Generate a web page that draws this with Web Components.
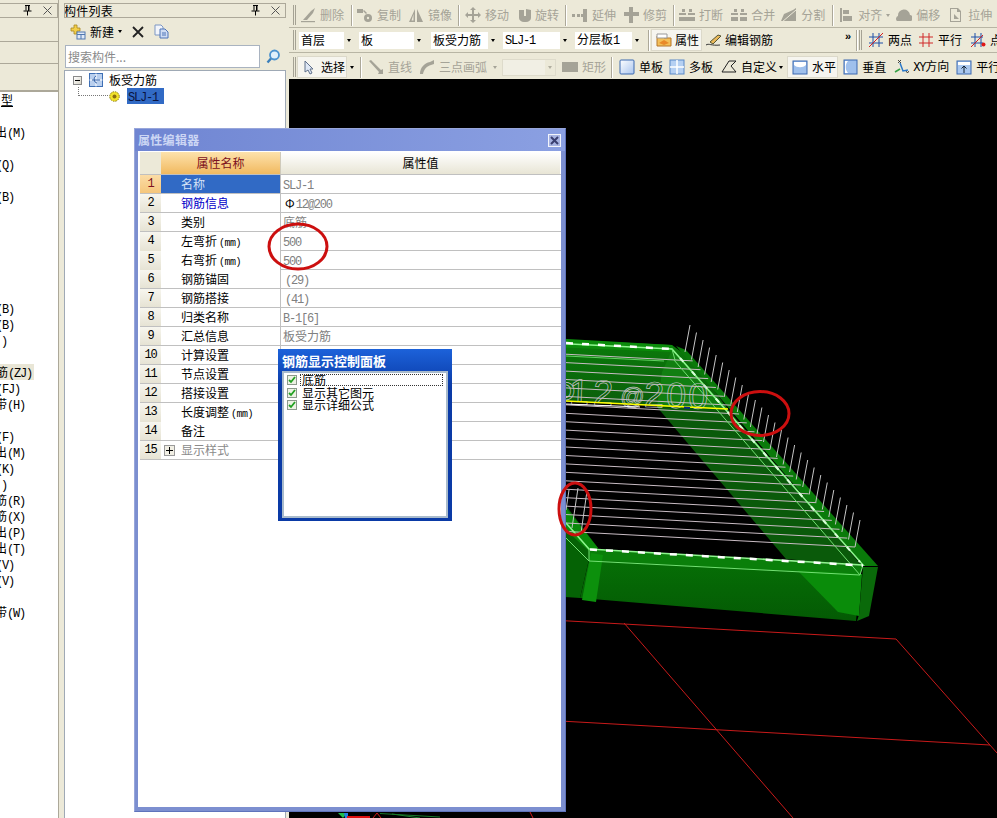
<!DOCTYPE html>
<html lang="zh"><head><meta charset="utf-8"><title>属性编辑器</title>
<style>
html,body{margin:0;padding:0;background:#ece9d8;overflow:hidden}
body{font:12px/14px "Noto Sans CJK SC","Liberation Sans",sans-serif;color:#000}
</style></head><body>
<gcl-app>
  <left-dock>
    <list-row w="12" un>型</list-row>
    <list-row></list-row>
    <list-row w="24">出<lat-t>(M)</lat-t></list-row>
    <list-row></list-row>
    <list-row w="13"><lat-t>(Q)</lat-t></list-row>
    <list-row></list-row>
    <list-row w="13"><lat-t>(B)</lat-t></list-row>
    <list-row></list-row><list-row></list-row><list-row></list-row><list-row></list-row><list-row></list-row><list-row></list-row>
    <list-row w="13"><lat-t>(B)</lat-t></list-row>
    <list-row w="13"><lat-t>(B)</lat-t></list-row>
    <list-row w="6"><lat-t>)</lat-t></list-row>
    <list-row></list-row>
    <list-row w="31" hot>筋<lat-t>(ZJ)</lat-t></list-row>
    <list-row w="19"><lat-t>(FJ)</lat-t></list-row>
    <list-row w="24">带<lat-t>(H)</lat-t></list-row>
    <list-row></list-row>
    <list-row w="13"><lat-t>(F)</lat-t></list-row>
    <list-row w="24">出<lat-t>(M)</lat-t></list-row>
    <list-row w="13"><lat-t>(K)</lat-t></list-row>
    <list-row w="6"><lat-t>)</lat-t></list-row>
    <list-row w="24">筋<lat-t>(R)</lat-t></list-row>
    <list-row w="24">筋<lat-t>(X)</lat-t></list-row>
    <list-row w="24">出<lat-t>(P)</lat-t></list-row>
    <list-row w="24">出<lat-t>(T)</lat-t></list-row>
    <list-row w="13"><lat-t>(V)</lat-t></list-row>
    <list-row w="13"><lat-t>(V)</lat-t></list-row>
    <list-row></list-row>
    <list-row w="24">带<lat-t>(W)</lat-t></list-row>
  </left-dock>

  <comp-dock></comp-dock>

  <work-area>
    <tool-row slot="tools">
      <tool-btn off icon="del">删除</tool-btn>
      <tool-sep style="margin-left:3px"></tool-sep>
      <tool-btn off icon="copy">复制</tool-btn>
      <tool-btn off icon="mirror" style="margin-left:-1px">镜像</tool-btn>
      <tool-sep style="margin:0 2px"></tool-sep>
      <tool-btn off icon="move" style="margin-left:-1px">移动</tool-btn>
      <tool-btn off icon="rotate" style="--gap:2px">旋转</tool-btn>
      <tool-sep style="margin:0 2px"></tool-sep>
      <tool-btn off icon="extend" style="margin-left:-1px">延伸</tool-btn>
      <tool-btn off icon="trim" style="margin-left:-1px">修剪</tool-btn>
      <tool-sep style="margin-left:2px"></tool-sep>
      <tool-btn off icon="break">打断</tool-btn>
      <tool-btn off icon="merge">合并</tool-btn>
      <tool-btn off icon="split" style="margin-left:-2px">分割</tool-btn>
      <tool-sep style="margin-left:3px"></tool-sep>
      <tool-btn off icon="align" arrow style="--pr:0px">对齐</tool-btn>
      <tool-btn off icon="offset">偏移</tool-btn>
      <tool-btn off icon="stretch">拉伸</tool-btn>
    </tool-row>
    <tool-row slot="tools">
      <tool-combo w="55" style="margin-left:3px">首层</tool-combo>
      <tool-combo w="65" style="margin-left:5px">板</tool-combo>
      <tool-combo w="67" style="margin-left:7px">板受力筋</tool-combo>
      <tool-combo w="67" style="margin-left:5px"><lat-t>SLJ-1</lat-t></tool-combo>
      <tool-combo w="67" style="margin-left:5px">分层板<lat-t>1</lat-t></tool-combo>
      <tool-sep style="margin-left:6px"></tool-sep>
      <tool-btn on icon="prop" style="margin-left:1px;--pl:5px;--gap:3px;--pr:3px">属性</tool-btn>
      <tool-btn icon="edit" style="--pl:3px">编辑钢筋</tool-btn>
      <more-mark style="margin-left:68px"></more-mark>
      <tool-sep style="margin-left:4px"></tool-sep>
      <tool-grip style="margin-left:1px"></tool-grip>
      <tool-btn icon="two" style="margin-left:2px">两点</tool-btn>
      <tool-btn icon="para" style="margin-left:-2px">平行</tool-btn>
      <tool-btn icon="pt">点</tool-btn>
    </tool-row>
    <tool-row slot="tools" last>
      <tool-btn on icon="cursor" style="margin-left:1px;--pr:2px">选择</tool-btn>
      <drop-arrow style="margin-left:3px"></drop-arrow>
      <tool-sep style="margin-left:6px"></tool-sep>
      <tool-btn off icon="line" style="margin-left:2px">直线</tool-btn>
      <tool-btn off icon="arc" arrow style="margin-left:-1px;--pr:0px;--arrow-gap:2px">三点画弧</tool-btn>
      <tool-combo off w="54" style="margin-left:3px"></tool-combo>
      <tool-btn off icon="rect" style="margin-left:2px">矩形</tool-btn>
      <tool-sep style="margin-left:1px"></tool-sep>
      <tool-btn icon="single" style="margin-left:2px">单板</tool-btn>
      <tool-btn icon="multi" style="margin-left:-2px">多板</tool-btn>
      <tool-btn icon="custom" arrow style="--pr:0px;--arrow-gap:-2px">自定义</tool-btn>
      <tool-btn on icon="horiz" style="margin-left:2px;--pl:5px;--pr:2px">水平</tool-btn>
      <tool-btn icon="vert">垂直</tool-btn>
      <tool-btn icon="xy" style="margin-left:-1px"><lat-t>XY</lat-t>方向</tool-btn>
      <tool-btn icon="hpara" style="margin-left:-1px">平行</tool-btn>
    </tool-row>
    <view-canvas></view-canvas>
  </work-area>

  <prop-dialog>
    <prop-row idx="1" tone="sel" name="名称"><lat-t>SLJ-1</lat-t></prop-row>
    <prop-row idx="2" tone="link" name="钢筋信息"><span style="color:#000;margin:0 1px 0 2px">Φ</span><lat-t>12@200</lat-t></prop-row>
    <prop-row idx="3" name="类别">底筋</prop-row>
    <prop-row idx="4" name="左弯折(mm)"><lat-t>500</lat-t></prop-row>
    <prop-row idx="5" name="右弯折(mm)"><lat-t>500</lat-t></prop-row>
    <prop-row idx="6" name="钢筋锚固"><lat-t style="margin-left:2px">(29)</lat-t></prop-row>
    <prop-row idx="7" name="钢筋搭接"><lat-t style="margin-left:2px">(41)</lat-t></prop-row>
    <prop-row idx="8" name="归类名称"><lat-t>B-1[6]</lat-t></prop-row>
    <prop-row idx="9" name="汇总信息">板受力筋</prop-row>
    <prop-row idx="10" name="计算设置"></prop-row>
    <prop-row idx="11" name="节点设置"></prop-row>
    <prop-row idx="12" name="搭接设置"></prop-row>
    <prop-row idx="13" name="长度调整(mm)"></prop-row>
    <prop-row idx="14" name="备注"></prop-row>
    <prop-row idx="15" tone="group" name="显示样式"></prop-row>
  </prop-dialog>

  <rebar-panel>
    <check-row focus>底筋</check-row>
    <check-row>显示其它图元</check-row>
    <check-row>显示详细公式</check-row>
  </rebar-panel>

  <mark-layer></mark-layer>
</gcl-app>

<script>
const CJK='"Noto Sans CJK SC","Liberation Sans",sans-serif';
const MONO='"Liberation Mono","Noto Sans CJK SC",monospace';
const def=(name,render)=>customElements.define(name,class extends HTMLElement{
  connectedCallback(){ if(!this.shadowRoot){this.attachShadow({mode:'open'}).innerHTML=render(this);} }
});
const I={
 del:'<path d="M1 14h14v1.200H1z"/><path d="M3 13l8-9 4-3-2 5-6 7z"/>',
 copy:'<path d="M0 2h6v4H0z"/><path d="M7 3l3 3-1 1-3-3z"/><circle cx="11" cy="11" r="4"/><circle cx="11" cy="11" r="1.200" fill="#ece9d8"/>',
 mirror:'<path d="M7 2v13H1zM5.500 7 3.500 13.500h2z" fill-rule="evenodd"/><path d="M9 2l6 13H9z"/>',
 move:'<path d="M8 0l3 3H9v4h4V5l3 3-3 3V9H9v4h2l-3 3-3-3h2V9H3v2L0 8l3-3v2h4V3H5z"/>',
 rotate:'<path d="M2 3h5v6h2V2l5 1v8a5 4 0 01-5 4H7a5 4 0 01-5-4z"/>',
 extend:'<path d="M0 7h3v3H0zM5 7h3v3H5zM9 7h2v3H9zM11 2h4v13h-4z"/>',
 trim:'<path d="M6 0h4v5h6v4h-6v7H6V9H1V5h5z"/>',
 break:'<path d="M3 2h3v3H3zM10 2h3v3h-3zM0 6h7v2H0zM9 6h7v2H9zM0 10h16v4H0z"/>',
 merge:'<path d="M3 2h3v3H3zM10 2h3v3h-3zM0 6h7v2H0zM9 6h7v2H9zM0 10h7v4H0zM9 10h7v4H9z"/>',
 split:'<path d="M0 14l3-7 9-4 3-2v13z"/><path d="M1 15L15 3" stroke="#ece9d8"/>',
 align:'<path d="M2 1h2v14H2zM5 3h6v4H5zM5 9h9v5H5z"/>',
 offset:'<path d="M1 14a3 3 0 011-5 6 6 0 0112-1 3.200 3.200 0 011 6z"/>',
 stretch:'<path d="M2 1h8l3 3v11H2zM3 2v12h9V5H9V2z" fill-rule="evenodd"/><path d="M6 7l5 5H6z"/>',
 prop:'<path d="M1 4h6l1 2h7v8H1z" fill="#f3c05a" stroke="#b5762a"/><path d="M1 2h10v4H1z" fill="#fff" stroke="#999"/><path d="M3 11l5-3 5 3-5 2z" fill="#e8892a"/>',
 edit:'<path d="M1 13c3-2 5 1 14 0" stroke="#333" fill="none"/><path d="M5 10l8-7 3 1-8 8z" fill="#e9b85a" stroke="#553"/>',
 two:'<g stroke="#1c4fa8" fill="none"><path d="M1 5h14M1 11h14M5 1v14M11 1v14"/></g><path d="M1 15L15 1" stroke="#d42020" fill="none"/>',
 para:'<g stroke="#d02828" fill="none"><path d="M1 5h14M1 11h14M5 1v14M11 1v14"/></g>',
 pt:'<g stroke="#1c4fa8" fill="none"><path d="M1 5h12M1 11h12M5 1v14M11 1v14"/></g><path d="M1 15L13 3" stroke="#d42020" fill="none"/><circle cx="13.500" cy="12.500" r="2" fill="#e01818"/>',
 cursor:'<path d="M4 2v11l3-2 2 4 2-1-2-4h3z" fill="#dfe8f5" stroke="#60708a"/>',
 line:'<path d="M1 2l2-1 10 10 2-1v5H10l1-2z"/>',
 arc:'<path d="M1 15c0-6 4-11 10-12l4-2v4l-3 1c-4 1-7 4-8 9z"/>',
 rect:'<path d="M0 3h16v10H0z"/>',
 single:'<defs><linearGradient id="a" x1="0" y1="0" x2="1" y2="1"><stop offset="0" stop-color="#fff"/><stop offset="1" stop-color="#a9c4ee"/></linearGradient></defs><rect x="1" y="1" width="14" height="14" rx="1" fill="url(#a)" stroke="#3a69b0"/>',
 multi:'<rect x="1" y="1" width="14" height="14" fill="#b5d0f2" stroke="#5a8ac8"/><path d="M8 1v14M1 8h14" stroke="#fff" stroke-width="1.500"/>',
 custom:'<path d="M1 13L8 2h7l-5 5 5 6z" fill="none" stroke="#222"/>',
 horiz:'<rect x="1" y="2" width="14" height="13" fill="#9fc0ec" stroke="#3a69b0"/><path d="M2 3h12v3c-3 3-9 3-12 0z" fill="#fff"/>',
 vert:'<rect x="2" y="1" width="13" height="14" fill="#9fc0ec" stroke="#3a69b0"/><path d="M3 2h3c-3 3-3 9 0 12H3z" fill="#fff"/>',
 xy:'<path d="M7 4l3 8 5-1" fill="none" stroke="#2b78c8" stroke-width="1.500"/><path d="M2 13l5-3" stroke="#35a045" stroke-width="1.500"/><path d="M5 1l3 3M8 1L5 4M13 12l1.500 2 1.500-2" stroke="#222" fill="none" stroke-width=".8"/>',
 hpara:'<rect x="1" y="2" width="14" height="13" fill="#a9c7ef" stroke="#3a69b0"/><path d="M2 3h12v3H2z" fill="#fff"/><path d="M8 14V7M5.500 9.500L8 7l2.500 2.500" stroke="#123" fill="none"/>'
};
const ico=n=>`<svg width="16" height="16" viewBox="0 0 16 16" fill="currentColor" style="flex:none;display:block">${I[n]||''}</svg>`;
const arrow=`<span style="display:block;width:0;height:0;border:solid transparent;border-width:3px 2.500px 0;border-top-color:currentColor;flex:none"></span>`;

def('lat-t',()=>`<style>:host{display:inline;font:12px/14px ${MONO};letter-spacing:-1.2px}</style><slot></slot>`);

def('gcl-app',()=>`<style>:host{display:flex;position:relative;width:997px;height:818px;overflow:hidden;background:#ece9d8;font:12px/14px ${CJK}}</style><slot></slot>`);

def('dock-title',h=>`<style>
:host{display:flex;align-items:center;height:15px;box-sizing:border-box;border:1px solid #aca899;background:#ece9d8;flex:none;position:relative;overflow:hidden}
.t{flex:1;font-size:12px;line-height:13px;white-space:nowrap;letter-spacing:.25px;margin-left:-1px}
svg{display:block;flex:none}
</style><span class="t"><slot></slot></span>
<svg width="9" height="11" viewBox="0 0 9 11" style="margin-right:11px"><path d="M2 .5h5M3 .5v5M6 .5v5M.5 6h8M4.500 6v4.500" stroke="#000" fill="none"/><path d="M5 1h1v5H5z"/></svg>
<svg width="9" height="9" viewBox="0 0 9 9" style="margin-right:5px"><path d="M.5.5l8 8M8.500.5l-8 8" stroke="#555" fill="none"/></svg>`);

def('left-dock',()=>`<style>
:host{display:flex;flex-direction:column;width:59px;margin-right:5px;padding-top:3px;box-sizing:border-box;height:818px;flex:none;border-right:1px solid #aca899}
.s{height:22px;box-sizing:border-box;border-bottom:1px solid #aca899;flex:none}
.s.b{height:27px}
.l{flex:1;background:#fff;overflow:hidden;border-top:1px solid #aca899}
dock-title{margin-bottom:1px}
</style><dock-title style="margin-left:-2px"></dock-title>
<div class="s" style="height:23px"></div><div class="s"></div><div class="s b"></div>
<div class="l"><slot></slot></div>`);

def('list-row',h=>`<style>
:host{display:flex;justify-content:flex-end;height:16px;line-height:16px;white-space:nowrap;box-sizing:border-box;width:${(+h.getAttribute('w')||1)+1}px;overflow:hidden}
:host([un]) span{text-decoration:underline}
:host([hot]){background:#e9e6d6;width:34px;padding-right:2px}
span{display:block;font-size:12px;flex:none}
</style><span><slot></slot></span>`);

def('comp-dock',()=>`<style>
:host{display:flex;flex-direction:column;width:222px;padding-top:3px;box-sizing:border-box;height:818px;flex:none}
.bar{display:flex;align-items:center;height:27px;flex:none;padding-left:6px;box-sizing:border-box}
.bar svg{display:block;flex:none}
.new{margin-left:4px;font-size:12px}
.find{display:flex;height:25px;flex:none;align-items:flex-start}
.inp{width:195px;height:23px;box-sizing:border-box;margin-left:1px;background:#fff;border:1px solid #a9b3c0;color:#8a8a8a;padding:3px 2px;font-size:12px;line-height:15px}
.tree{flex:1;background:#fff;border:1px solid #9fa9b5;border-bottom:0;box-sizing:border-box;padding:1px 0 0 8px}
.n1,.n2{display:flex;align-items:center}
.n1{height:16px}
.exp{width:9px;height:9px;border:1px solid #8a8a8a;box-sizing:border-box;background:linear-gradient(135deg,#fff,#d8d5c8);position:relative;flex:none}
.exp:after{content:"";position:absolute;left:1px;right:1px;top:3px;height:1px;background:#000}
.lab{margin-left:6px}
.n2{height:16px;margin-left:5px}
.dot{width:30px;height:9px;margin-top:-9px;border-left:1px dotted #777;border-bottom:1px dotted #777;box-sizing:border-box;flex:none}
.sel{background:#316ac5;color:#0a1440;margin-left:7px;padding:0 6px 0 1px;height:16px;line-height:16px;display:block}
</style>
<dock-title>构件列表</dock-title>
<div class="bar">
<svg width="16" height="16" viewBox="0 0 16 16"><path d="M1 4h3V1h3v3h3v3H7v3H4V7H1z" fill="#f2cf4a" stroke="#a88620" stroke-width=".8"/><rect x="7" y="8" width="8" height="7" fill="#dfe9f7" stroke="#5078b0"/><path d="M7 10.500h8M11 10.500V15" stroke="#5078b0"/></svg>
<span class="new">新建</span><span style="margin-left:4px">${arrow}</span>
<svg style="margin-left:10px" width="12" height="12" viewBox="0 0 12 12"><path d="M1 1l10 10M11 1L1 11" stroke="#222" stroke-width="1.800"/></svg>
<svg style="margin-left:10px" width="15" height="15" viewBox="0 0 15 15"><path d="M1 1h6l2 2v8H1z" fill="#f2f5fb" stroke="#7c97c4"/><path d="M6 5h5l3 3v6H6z" fill="#cfdcf3" stroke="#4f74b8"/><path d="M8 9h4M8 11h4" stroke="#4f74b8"/></svg>
</div>
<div class="find"><div class="inp">搜索构件...</div>
<svg style="margin:4px 0 0 6px" width="15" height="15" viewBox="0 0 15 15"><circle cx="8.500" cy="6" r="4.500" fill="#dff0fb" stroke="#4b93cf" stroke-width="1.800"/><path d="M5 9.500l-3.500 4" stroke="#3b7fbb" stroke-width="2.400"/></svg></div>
<div class="tree">
 <div class="n1"><span class="exp"></span>
 <svg style="margin-left:7px" width="14" height="14" viewBox="0 0 14 14"><rect x=".5" y=".5" width="13" height="13" fill="#b9cfee" stroke="#3e6fb5"/><path d="M7 .5v13M.5 7h13" stroke="#fff"/><path d="M3 7h8M7 3c-3 1-2 7 1 7" stroke="#2f5fa8" fill="none"/></svg>
 <span class="lab">板受力筋</span></div>
 <div class="n2"><span class="dot"></span>
 <svg width="11" height="11" viewBox="0 0 11 11" style="flex:none;margin-left:1px"><circle cx="5.500" cy="5.500" r="4.800" fill="#f2e22a" stroke="#8a7a10" stroke-dasharray="1.500 1"/><circle cx="5.500" cy="5.500" r="2" fill="#8a6d10"/></svg>
 <span class="sel"><lat-t>SLJ-1</lat-t></span></div>
</div>`);

def('work-area',()=>`<style>
:host{display:flex;flex-direction:column;margin-left:3px;width:708px;height:818px;flex:none;padding-top:3px;box-sizing:border-box;overflow:hidden}
</style><slot name="tools"></slot><slot></slot>`);

def('tool-row',h=>`<style>
:host{display:flex;align-items:center;height:${h.hasAttribute('last')?26:25}px;box-sizing:border-box;flex:none;padding-left:4px;${h.hasAttribute('last')?'padding-top:2px;':'border-bottom:1px solid #b8b5a4;'}white-space:nowrap;width:708px;overflow:hidden}
</style><tool-grip></tool-grip><slot></slot>`);

def('tool-grip',()=>`<style>:host{display:block;width:3px;height:20px;box-sizing:border-box;border-left:1px solid #a5a294;border-right:1px solid #a5a294;flex:none}</style>`);
def('tool-sep',()=>`<style>:host{display:block;width:2px;height:21px;box-sizing:border-box;border-left:1px solid #aca899;border-right:1px solid #fff;flex:none}</style>`);
def('more-mark',()=>`<style>:host{display:block;width:7px;height:14px;font:bold 11px/10px "Liberation Sans",sans-serif;flex:none;margin-top:-4px}</style>»`);
def('drop-arrow',()=>`<style>:host{display:block;flex:none;color:#000}</style>${arrow}`);

def('tool-btn',h=>`<style>
:host{display:inline-flex;align-items:center;height:22px;box-sizing:border-box;padding:0 var(--pr,4px) 0 var(--pl,4px);gap:var(--gap,4px);flex:none;font-size:12px;line-height:14px;color:#000;white-space:nowrap}
:host([off]){color:#a5a397}
:host([on]){background:#f6f5ef;outline:1px solid #dcd9ca;outline-offset:-1px}
.a{margin-left:var(--arrow-gap,0px);margin-right:2px}
</style>${ico(h.getAttribute('icon'))}<span><slot></slot></span>${h.hasAttribute('arrow')?`<span class="a">${arrow}</span>`:''}`);

def('tool-combo',h=>`<style>
:host{display:flex;align-items:center;height:17px;width:${h.getAttribute('w')}px;flex:none;box-sizing:border-box;background:#fff;font-size:12px;line-height:14px;color:${h.hasAttribute('off')?'#b0ae9f':'#000'}}
:host([off]){background:#f1efe4;border:1px solid #dedbcb}
.t{flex:1;padding-left:2px;overflow:hidden;white-space:nowrap}
.b{width:10px;height:100%;background:#ece9d8;display:flex;align-items:center;justify-content:center;flex:none}
</style><span class="t"><slot></slot></span><span class="b">${arrow}</span>`);

def('view-canvas',()=>{
  let bars='',verts='';
  for(let i=1;i<=22;i++){const t=i/22,xr=685+170*t,yr=352+195*t,yl=yr-(xr-566)*.055;bars+=`M560 ${yl.toFixed(1)}L${xr.toFixed(1)} ${yr.toFixed(1)}`;}
  for(let i=0;i<=26;i++){const t=i/26,x=685+170*t,y=352+195*t;verts+=`M${x.toFixed(1)} ${y.toFixed(1)}l5 -27`;}
  return `<style>:host{display:block;flex:1;background:#000;overflow:hidden;min-height:0}svg{display:block}</style>
<svg width="708" height="739" viewBox="289 79 708 739">
 <defs><linearGradient id="fw" x1="0" y1="0" x2="0" y2="1"><stop offset="0" stop-color="#0a7c0a"/><stop offset="1" stop-color="#0b5c0b"/></linearGradient>
 <linearGradient id="nw" x1="0" y1="0" x2="0" y2="1"><stop offset="0" stop-color="#066f06"/><stop offset="1" stop-color="#045a04"/></linearGradient></defs>
 <g stroke="#c81a1a" fill="none">
  <path d="M560 620.500L896 639L997 753"/><path d="M560 721L990 745"/><path d="M624 623L793 818"/>
 </g>
 <path d="M550 339L672 345L690 358L728 409L550 401z" fill="url(#fw)"/>
 <path d="M550 338L672 345L675 352L550 347z" fill="#0b8c0b"/>
 <path d="M672 350L728 409L657 407L662 372z" fill="#117f11"/>
 <path d="M676 346L686 350L878 566L863 566z" fill="#0a7a0a"/>
 <path d="M657 407L728 409L862 566L786 559z" fill="#0a5a0a"/>
 <path d="M550 505L567 507L598 548L590 555L580 598L550 596z" fill="#056205"/>
 <path d="M566 508L598 548L590 552L566 530z" fill="#0a8a0a"/>
 <path d="M589 549L863 566L860 575L589 561z" fill="#0a7f0a"/>
 <path d="M589 560L860 575L856 621L580 598z" fill="url(#nw)"/>
 <path d="M797 570L862 574L859 616L838 612z" fill="#0a8c0a"/>
 <path d="M863 567L878 567L869 616L857 621L859 615z" fill="#0a6a0a"/>
 <path d="M591 553L603 555L596 602L582 600z" fill="#0c900c"/>
 <path d="${bars}" stroke="#c9bcc4" fill="none"/>
 <path d="${verts}" stroke="#c6c6c6" fill="none"/>
 <path d="M578 488l-6 40M587 491l-6 42M569 490l-3 20" stroke="#c6c6c6" fill="none"/>
 <g stroke="#8cf58c" fill="none">
  <path d="M550 343L672 349L863 565L589 549L566 523" stroke-width="1.600"/>
  <path d="M566 356L664 361" stroke="#60d060"/>
  <path d="M674 360L860 575L589 561L589 549M863 565L860 575M566 538L589 561" stroke="#73e073"/>
  <path d="M672 349L675 360" stroke="#73e073"/>
 </g>
 <path d="M590 549.500L863 565.500" stroke="#fff" stroke-width="2.500" stroke-dasharray="7 9"/>
 <path d="M566 343L672 349" stroke="#fff" stroke-width="2.500" stroke-dasharray="7 9"/>
 <path d="M680 358L860 562" stroke="#d8ffd8" stroke-width="2" stroke-dasharray="5 13"/>
 <text y="404" transform="rotate(2 566 400)" font-family="Liberation Sans" font-size="36" fill="none" stroke="#c8c4c8" stroke-width=".7"><tspan x="547 569 593">Φ12</tspan><tspan x="620" y="402" font-size="24">@</tspan><tspan x="644 666 688" y="404">200</tspan></text>
 <path d="M566 404L640 407" stroke="#fff"/>
 <path d="M566 401L728 409" stroke="#ff0" stroke-width="1.700"/>
 <path d="M684 407.500L690 408" stroke="#0a2a80" stroke-width="2"/>
 <path d="M285 813v5" stroke="#bbb" stroke-width="2"/>
 <path d="M338 813h9l-4 5z" fill="#1fbf4a"/><path d="M344 813h4v5h-3z" fill="#1f7fe0"/>
 <path d="M347 817h23" stroke="#e01010" stroke-width="2"/><path d="M373 818l4-5 4 5" stroke="#d01a1a" fill="none"/>
 <path d="M380 813.500L405 815L440 817" stroke="#1a7a2a" fill="none"/><path d="M392 814L420 818" stroke="#1a7a2a" fill="none"/>
 <path d="M530 812L533 818" stroke="#d01a1a" fill="none"/>
</svg>`;});

def('prop-dialog',()=>`<style>
:host{position:absolute;left:134px;top:128px;width:432px;height:684px;box-sizing:border-box;background:#7c8fd0;border:1px solid #98a6da;border-right-color:#5f73bb;border-bottom-color:#5f73bb;display:flex;flex-direction:column;padding:0 4px 4px 3px}
.tb{height:22px;flex:none;display:flex;align-items:center;justify-content:space-between;background:linear-gradient(90deg,#6f85d2,#8ba0e2);margin:0 -4px 0 -3px;padding:0 4px 0 3px;box-sizing:border-box}
.ti{color:#ccd6f4;font-weight:700;font-size:12px;letter-spacing:.3px}
.x{width:13px;height:13px;box-sizing:border-box;border:1px solid #f2f4fb;background:#a8b4e2;display:flex;align-items:center;justify-content:center}
.bd{flex:1;background:#fff;padding:1px 0 0 2px;box-sizing:border-box}
.hd{display:grid;grid-template-columns:21px 120px 279px;height:23px;box-sizing:border-box;border-bottom:1px solid #c0c0c0;font-size:12px;line-height:22px;text-align:center}
.c0{background:#ece9d8}
.c1{background:linear-gradient(#fde2ac,#f1b95f);color:#7c1020;border-right:1px solid #cfcabb}
.c2{background:linear-gradient(#fff,#e8e5d5)}
</style>
<div class="tb"><span class="ti">属性编辑器</span><span class="x"><svg width="9" height="9" viewBox="0 0 9 9"><path d="M1 1l7 7M8 1L1 8" stroke="#3a3f70" stroke-width="2"/></svg></span></div>
<div class="bd"><div class="hd"><span class="c0"></span><span class="c1">属性名称</span><span class="c2">属性值</span></div><slot></slot></div>`);

def('prop-row',h=>{const tone=h.getAttribute('tone')||'';const sel=tone==='sel';
 let nm=h.getAttribute('name').replace(/\(mm\)/,`<span class="u">(mm)</span>`);
 return `<style>
:host{display:grid;grid-template-columns:21px 120px 279px;height:19px;box-sizing:border-box;border-bottom:1px solid #c0c0c0;font-size:12px;line-height:18px;white-space:nowrap}
.i{background:${sel?'linear-gradient(#fbdca6,#f5c67c)':'linear-gradient(#f7f6ef,#e6e3d4)'};color:${sel?'#7c1020':'#000'};text-align:center;font:12px/18px ${MONO};letter-spacing:-1.2px}
.n{padding-left:${tone==='group'?3:20}px;border-right:1px solid #c0c0c0;background:${sel?'#316ac5':'#fff'};color:${sel?'#d5e2f7':tone==='link'?'#0000c8':tone==='group'?'#8a8a8a':'#000'};display:flex;align-items:center;box-sizing:border-box}
.u{font:10px/14px ${MONO};letter-spacing:-.5px;margin-left:2px}
.v{padding-left:2px;color:#808080;overflow:hidden}
.p{width:11px;height:11px;box-sizing:border-box;border:1px solid #9a9a9a;background:#f1efe4;margin-right:6px;position:relative;flex:none}
.p:before{content:"";position:absolute;left:1px;right:1px;top:4px;height:1px;background:#000}
.p:after{content:"";position:absolute;top:1px;bottom:1px;left:4px;width:1px;background:#000}
</style><span class="i">${h.getAttribute('idx')}</span><span class="n">${tone==='group'?'<span class="p"></span>':''}<span>${nm}</span></span><span class="v"><slot></slot></span>`;});

def('rebar-panel',()=>`<style>
:host{position:absolute;left:278px;top:349px;width:174px;height:172px;box-sizing:border-box;background:linear-gradient(#1c62da,#0a3aa6 22%,#0a3aa6);padding:2px 4px 3px;display:flex;flex-direction:column;color:#000}
.t{height:20px;flex:none;color:#fff;font-weight:700;font-size:13px;line-height:20px;white-space:nowrap}
.b{flex:1;background:#fff;border:2px solid #a9bbcc;box-sizing:border-box;padding:1px 2px 0 3px}
</style><div class="t">钢筋显示控制面板</div><div class="b"><slot></slot></div>`);

def('check-row',()=>`<style>
:host{display:flex;align-items:center;height:12.500px;font-size:12px;line-height:12px;white-space:nowrap;position:relative}
:host([focus]) .f{display:block}
.f{display:none;position:absolute;left:13px;right:1px;top:0;height:12px;box-sizing:border-box;border:1px dotted #333}
.c{width:10px;height:10px;box-sizing:border-box;border:1px solid #8c9a8c;background:#edf2e4;display:flex;align-items:center;justify-content:center;flex:none;margin-right:5px}
</style><span class="c"><svg width="8" height="8" viewBox="0 0 8 8"><path d="M1 4l2 2 4-5" stroke="#21a121" stroke-width="1.800" fill="none"/></svg></span><span class="f"></span><span><slot></slot></span>`);

def('mark-layer',()=>`<style>:host{position:absolute;left:0;top:0;width:997px;height:818px;pointer-events:none}svg{display:block}</style>
<svg width="997" height="818" viewBox="0 0 997 818" fill="none" stroke="#cc0f0f" stroke-width="3">
 <ellipse cx="298" cy="246.500" rx="29" ry="22.500"/>
 <ellipse cx="760" cy="413.500" rx="29" ry="22"/>
 <ellipse cx="575" cy="509" rx="16" ry="26"/>
</svg>`);
</script>
</body></html>
